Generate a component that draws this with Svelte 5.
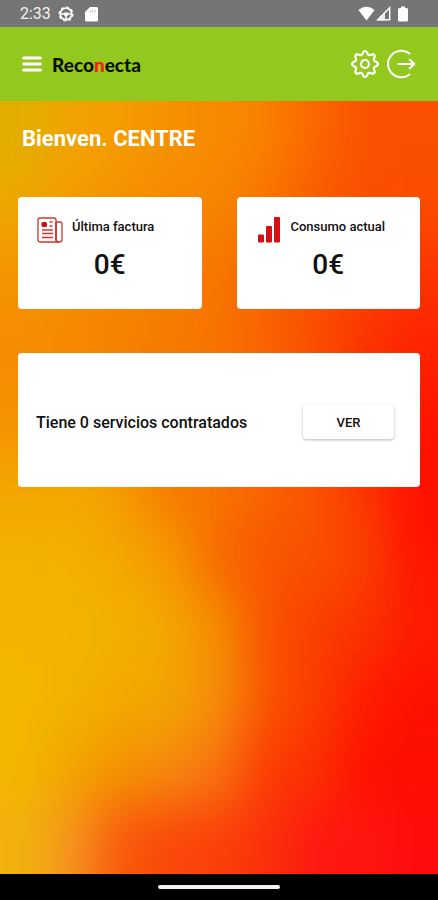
<script>
  const mesh = [
    ['#e2ae00', '#f2a200', '#f59c00', '#f59200', '#f78a00', '#f98000', '#fa6600', '#fa5200', '#fa5000'],
    ['#eea600', '#f59a00', '#f59000', '#f78800', '#f78400', '#f87400', '#fa5a00', '#fb4e00', '#fb4c00'],
    ['#f49400', '#f58c00', '#f68400', '#f77e00', '#f77400', '#f86400', '#fa5000', '#fb3e00', '#fd3200'],
    ['#f58c00', '#f58800', '#f68000', '#f67a00', '#f77200', '#f96200', '#fa4e00', '#fc3400', '#fe2400'],
    ['#f49200', '#f58c00', '#f68200', '#f77400', '#f76c00', '#f96000', '#fb4800', '#fd2800', '#ff1400'],
    ['#f3a600', '#f3a800', '#f59c00', '#f67a00', '#f77400', '#f96400', '#fa5200', '#fc3600', '#ff1000'],
    ['#f2b200', '#f3b000', '#f4a600', '#f69800', '#f76800', '#f95600', '#fa5000', '#fa4000', '#ff1400'],
    ['#f2b400', '#f2b400', '#f2b000', '#f3a600', '#f58c00', '#f95200', '#fa3e00', '#fb3200', '#fe1c00'],
    ['#f2b600', '#f2b200', '#f3a800', '#f3a400', '#f58c0c', '#f95400', '#fb3c00', '#fe1c00', '#fe1000'],
    ['#f2b600', '#f3a400', '#f49400', '#f58a10', '#f77410', '#fb3c04', '#fb3000', '#ff1000', '#fd0e00'],
    ['#f1b20c', '#f59220', '#f8580c', '#fa480a', '#fb400a', '#fb300a', '#fe1812', '#fe1610', '#ff0c0c']
  ];
  const step = 10;
  const last = { col: mesh[0].length - 1, row: mesh.length - 1 };

  // Border cells bleed outwards so that the blur never fades at the edges.
  const cells = mesh.flatMap((row, r) =>
    row.map((fill, c) => {
      const x = c === 0 ? -40 : c * step;
      const y = r === 0 ? -40 : r * step;
      const x2 = c === last.col ? (c + 1) * step + 40 : (c + 1) * step + 1;
      const y2 = r === last.row ? (r + 1) * step + 40 : (r + 1) * step + 1;
      return { x, y, w: x2 - x, h: y2 - y, fill };
    })
  );

  // Outline of the settings cog: eight soft teeth around a circle.
  const cog = 'M' + Array.from({ length: 96 }, (_, i) => {
    const a = (i * Math.PI) / 48;
    const radius = 11.3 + 1.7 * Math.cos(8 * a);
    return `${(15 + radius * Math.cos(a)).toFixed(2)} ${(15 + radius * Math.sin(a)).toFixed(2)}`;
  }).join('L') + 'Z';

  let services = $state(0);
</script>

<div class="screen">
  <div class="status">
    <span class="time">2:33</span>
    <svg width="16" height="16" viewBox="0 0 16 16" fill="none" stroke="#fff" aria-hidden="true">
      <circle cx="8" cy="8" r="5.800" stroke-width="1.800" />
      <circle cx="8" cy="8" r="7" stroke-width="1.200" stroke-dasharray="2.750 2.750" />
      <path d="M2.500 8h11M8 8v5.500" stroke-width="1.600" />
      <path d="M5.500 6.500h5L9.500 10h-3z" fill="#fff" stroke="none" />
    </svg>
    <svg class="sd" width="13" height="16" viewBox="0 0 13 16" aria-hidden="true">
      <path d="M5 1h6.500Q13 1 13 2.500v11.500q0 1.500-1.500 1.500h-10Q0 15.500 0 14V6z" fill="#fff" />
      <path d="M5 4v2.500M7.500 3.500v3M10 3.500v3" stroke="#c4c4c4" stroke-width="1" />
    </svg>
    <span class="grow"></span>
    <svg width="17" height="15" viewBox="0 0 18 15" preserveAspectRatio="none" aria-hidden="true">
      <path d="M.5 4Q4.500.8 9 .8T17.500 4L9 14.500z" fill="#fff" />
    </svg>
    <svg width="15" height="15" viewBox="0 0 15 15" aria-hidden="true">
      <path d="M1.800 13.800 13.700 1.800v12z" fill="none" stroke="#fff" stroke-width="1.400" />
      <path d="M.5 14.500 9 6v8.500z" fill="#fff" opacity=".85" />
    </svg>
    <svg class="battery" width="10" height="16" viewBox="0 0 10 16" aria-hidden="true">
      <path d="M3 .5h4V2h1.500Q10 2 10 3.500V14q0 1.500-1.500 1.500h-7Q0 15.500 0 14V3.500Q0 2 1.500 2H3z" fill="#fff" />
    </svg>
  </div>

  <header>
    <button class="icon" aria-label="Menú">
      <svg width="20" height="16" viewBox="0 0 20 16" stroke="#fff" stroke-width="3" stroke-linecap="round">
        <path d="M1.500 2h17M1.500 8h17M1.500 14h17" />
      </svg>
    </button>
    <span class="brand">Reco<b>n</b>ecta</span>
    <span class="grow"></span>
    <button class="icon" aria-label="Ajustes">
      <svg width="30" height="30" viewBox="0 0 30 30" fill="none" stroke="#fff" stroke-width="2.200" stroke-linejoin="round">
        <path d={cog} />
        <circle cx="15" cy="15" r="4" />
      </svg>
    </button>
    <button class="icon exit" aria-label="Salir">
      <svg width="30" height="30" viewBox="0 0 30 30" fill="none" stroke="#fff" stroke-width="2" stroke-linecap="round" stroke-linejoin="round">
        <path d="M23.500 4.500A13.300 13.300 0 1 0 23.500 25.500" />
        <path d="M12.500 15H28M23.800 10.800 28.300 15l-4.500 4.200" stroke-width="2.200" />
      </svg>
    </button>
  </header>

  <main>
    <svg class="backdrop" viewBox="0 0 90 110" preserveAspectRatio="none" aria-hidden="true">
      <defs>
        <filter id="soften" filterUnits="userSpaceOnUse" x="-30" y="-30" width="150" height="170" color-interpolation-filters="sRGB">
          <feGaussianBlur stdDeviation="4.400 3.800" />
        </filter>
      </defs>
      <g filter="url(#soften)">
        {#each cells as cell}
          <rect x={cell.x} y={cell.y} width={cell.w} height={cell.h} fill={cell.fill} />
        {/each}
      </g>
    </svg>

    <h1>Bienven. CENTRE</h1>

    <div class="cards">
      <section class="card">
        <div class="head">
          <svg width="26" height="26" viewBox="0 0 26 26" fill="none" stroke="#d9332e" stroke-width="1.300" aria-hidden="true">
            <path d="M19 22.500V3Q19 1 17 1H3Q1 1 1 3v19.500Q1 25 3.500 25h19q2.500 0 2.500-2.500V7q0-2-2-2h-4" />
            <path d="M19 5v17.500q0 2.500 2.500 2.500" stroke-width="1.800" />
            <path d="M12.500 5h3M12.500 9h3M5 13h11M5 16.500h11M5 20.500h11" />
            <rect x="4.500" y="5" width="5.500" height="5" rx="1.500" fill="#c80f10" stroke="none" />
          </svg>
          <h2>Última factura</h2>
        </div>
        <p class="amount">0€</p>
      </section>
      <section class="card">
        <div class="head">
          <svg width="26" height="26" viewBox="0 0 26 26" fill="#d80f12" aria-hidden="true">
            <rect x="2" y="17.500" width="6" height="8" rx="1" />
            <rect x="10" y="9" width="6" height="16.500" rx="1" />
            <rect x="18" y="0" width="6" height="25.500" rx="1" />
          </svg>
          <h2>Consumo actual</h2>
        </div>
        <p class="amount">0€</p>
      </section>
    </div>

    <section class="card services">
      <p>Tiene {services} servicios contratados</p>
      <button class="view">VER</button>
    </section>
  </main>

  <div class="nav"><span></span></div>
</div>

<style>
  :global(body) {
    margin: 0;
  }
  .screen {
    display: flex;
    flex-direction: column;
    min-height: 100vh;
    font-family: Roboto, 'Liberation Sans', sans-serif;
    color: #111;
  }
  button {
    font: inherit;
    color: inherit;
    cursor: pointer;
  }
  svg {
    display: block;
    flex: none;
  }
  .grow {
    flex: 1;
  }
  .status {
    display: flex;
    align-items: center;
    gap: 1px;
    height: 27px;
    padding: 0 30px 0 20px;
    background: #757575;
  }
  .time {
    margin-right: 6px;
    color: #f4f4f4;
    font-size: 16px;
  }
  .sd {
    margin-left: 10px;
  }
  .battery {
    margin-left: 6px;
  }
  header {
    display: flex;
    align-items: center;
    height: 74px;
    padding: 0 22px;
    background: #93c81e;
  }
  .icon {
    padding: 0;
    border: 0;
    background: none;
  }
  .exit {
    margin-left: 6px;
  }
  .brand {
    margin-left: 10px;
    color: #0b1004;
    font-family: Lato, sans-serif;
    font-size: 19px;
    font-weight: 900;
  }
  .brand b {
    color: #fb1b10;
    font-weight: inherit;
  }
  main {
    position: relative;
    flex: 1;
    padding: 24px 18px;
    background: #f77000;
    overflow: hidden;
  }
  .backdrop {
    position: absolute;
    inset: 0;
    width: 100%;
    height: 100%;
  }
  h1 {
    position: relative;
    margin: 0 4px 44px;
    color: #fff;
    font-size: 22px;
    font-weight: 700;
    line-height: 28px;
  }
  h2,
  p {
    margin: 0;
    font-weight: 500;
  }
  .cards {
    display: grid;
    grid-template-columns: 1fr 1fr;
    gap: 35px;
    margin-bottom: 44px;
  }
  .card {
    position: relative;
    box-sizing: border-box;
    min-height: 112px;
    padding: 20px 19px;
    border-radius: 4px;
    background: #fff;
  }
  .head {
    display: flex;
    gap: 9px;
  }
  h2 {
    font-size: 13px;
    line-height: 20px;
    white-space: nowrap;
  }
  .amount {
    font-size: 28px;
    line-height: 44px;
    text-align: center;
  }
  .services {
    display: flex;
    align-items: center;
    justify-content: space-between;
    min-height: 134px;
    padding: 24px 26px 20px 18px;
    font-size: 16px;
  }
  .view {
    width: 91px;
    height: 34px;
    border: 0;
    border-radius: 4px;
    background: #fff;
    box-shadow: 0 1px 3px rgb(0 0 0 / 28%);
    font-size: 13px;
    font-weight: 500;
  }
  .nav {
    display: flex;
    align-items: center;
    justify-content: center;
    height: 26px;
    background: #000;
  }
  .nav span {
    width: 122px;
    height: 4px;
    border-radius: 2px;
    background: #f2f2f2;
  }
</style>
